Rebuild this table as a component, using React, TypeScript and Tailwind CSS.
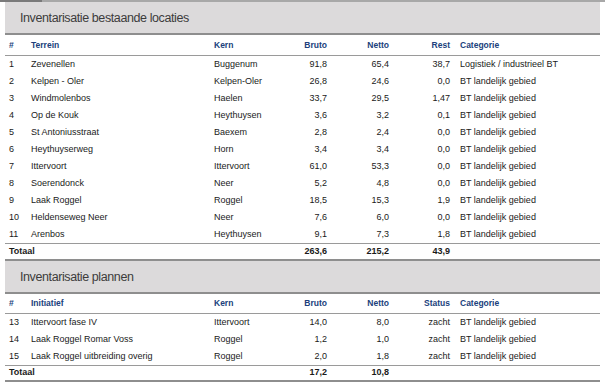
import React from "react";

type Row = { n: string; name: string; kern: string; bruto: string; netto: string; rest: string; cat: string };

const rows1: Row[] = [
  { n: "1", name: "Zevenellen", kern: "Buggenum", bruto: "91,8", netto: "65,4", rest: "38,7", cat: "Logistiek / industrieel BT" },
  { n: "2", name: "Kelpen - Oler", kern: "Kelpen-Oler", bruto: "26,8", netto: "24,6", rest: "0,0", cat: "BT landelijk gebied" },
  { n: "3", name: "Windmolenbos", kern: "Haelen", bruto: "33,7", netto: "29,5", rest: "1,47", cat: "BT landelijk gebied" },
  { n: "4", name: "Op de Kouk", kern: "Heythuysen", bruto: "3,6", netto: "3,2", rest: "0,1", cat: "BT landelijk gebied" },
  { n: "5", name: "St Antoniusstraat", kern: "Baexem", bruto: "2,8", netto: "2,4", rest: "0,0", cat: "BT landelijk gebied" },
  { n: "6", name: "Heythuyserweg", kern: "Horn", bruto: "3,4", netto: "3,4", rest: "0,0", cat: "BT landelijk gebied" },
  { n: "7", name: "Ittervoort", kern: "Ittervoort", bruto: "61,0", netto: "53,3", rest: "0,0", cat: "BT landelijk gebied" },
  { n: "8", name: "Soerendonck", kern: "Neer", bruto: "5,2", netto: "4,8", rest: "0,0", cat: "BT landelijk gebied" },
  { n: "9", name: "Laak Roggel", kern: "Roggel", bruto: "18,5", netto: "15,3", rest: "1,9", cat: "BT landelijk gebied" },
  { n: "10", name: "Heldenseweg Neer", kern: "Neer", bruto: "7,6", netto: "6,0", rest: "0,0", cat: "BT landelijk gebied" },
  { n: "11", name: "Arenbos", kern: "Heythuysen", bruto: "9,1", netto: "7,3", rest: "1,8", cat: "BT landelijk gebied" },
];

const rows2: Row[] = [
  { n: "13", name: "Ittervoort fase IV", kern: "Ittervoort", bruto: "14,0", netto: "8,0", rest: "zacht", cat: "BT landelijk gebied" },
  { n: "14", name: "Laak Roggel Romar Voss", kern: "Roggel", bruto: "1,2", netto: "1,0", rest: "zacht", cat: "BT landelijk gebied" },
  { n: "15", name: "Laak Roggel uitbreiding overig", kern: "Roggel", bruto: "2,0", netto: "1,8", rest: "zacht", cat: "BT landelijk gebied" },
];

const grid = "grid grid-cols-[26px_183px_75px_38px_62px_61px_1fr] items-center";

function Panel({ title }: { title: string }) {
  return (
    <div className="h-[33px] bg-[#dcdadb] flex items-center pl-[15px] pt-[1px] border-b-2 border-[#8e8e8e]">
      <span className="text-[12.5px] tracking-[-0.4px] text-[#3c3c3c] leading-none">{title}</span>
    </div>
  );
}

function Header({ name, rest, h }: { name: string; rest: string; h: string }) {
  return (
    <div className={`${grid} ${h} border-b border-[#9a9a9a] text-[8.5px] font-bold text-[#203f7c]`}>
      <div className="pl-[4px]">#</div>
      <div>{name}</div>
      <div>Kern</div>
      <div className="text-right">Bruto</div>
      <div className="text-right">Netto</div>
      <div className="text-right">{rest}</div>
      <div className="pl-[10px]">Categorie</div>
    </div>
  );
}

function DataRow({ r }: { r: Row }) {
  return (
    <div className={`${grid} h-[17px] text-[9px] text-[#1a1a1a]`}>
      <div className="pl-[4px]">{r.n}</div>
      <div>{r.name}</div>
      <div>{r.kern}</div>
      <div className="text-right">{r.bruto}</div>
      <div className="text-right">{r.netto}</div>
      <div className="text-right">{r.rest}</div>
      <div className="pl-[10px]">{r.cat}</div>
    </div>
  );
}

function Total({ b, n, r, h }: { b: string; n: string; r: string; h: string }) {
  return (
    <div className={`${grid} ${h} text-[9px] font-bold text-[#1a1a1a] border-t border-[#9a9a9a] border-b-2 border-b-[#8e8e8e]`}>
      <div className="col-span-3 pl-[4px]">Totaal</div>
      <div className="text-right">{b}</div>
      <div className="text-right">{n}</div>
      <div className="text-right">{r}</div>
      <div />
    </div>
  );
}

export default function App() {
  return (
    <div className="w-[605px] h-[386px] bg-white overflow-hidden" style={{ fontFamily: '"Liberation Sans", Arial, sans-serif' }}>
      <div className="flex h-[2px]">
        <div className="w-[42px] bg-[#7a7a7a]" />
        <div className="flex-1 bg-[#a8a8a8]" />
      </div>
      <div className="ml-[5px] w-[595px]">
        <Panel title="Inventarisatie bestaande locaties" />
        <Header name="Terrein" rest="Rest" h="h-[21px]" />
        {rows1.map((r) => (
          <DataRow key={r.n} r={r} />
        ))}
        <Total b="263,6" n="215,2" r="43,9" h="h-[18px]" />
        <Panel title="Inventarisatie plannen" />
        <Header name="Initiatief" rest="Status" h="h-[20px]" />
        {rows2.map((r) => (
          <DataRow key={r.n} r={r} />
        ))}
        <Total b="17,2" n="10,8" r="" h="h-[17px]" />
      </div>
    </div>
  );
}
